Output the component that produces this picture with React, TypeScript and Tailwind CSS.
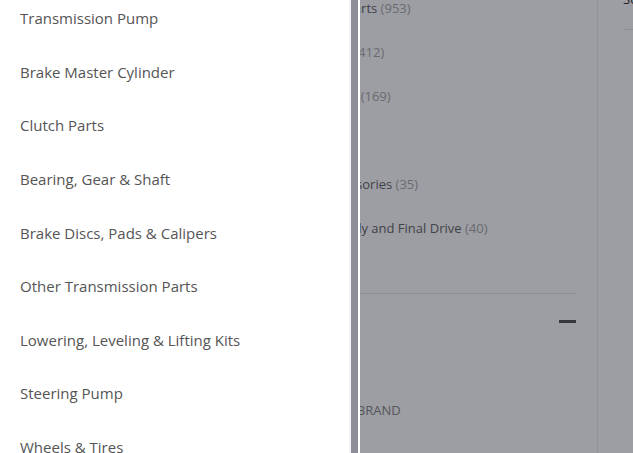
const drawerItems = [
  'Transmission Pump',
  'Brake Master Cylinder',
  'Clutch Parts',
  'Bearing, Gear & Shaft',
  'Brake Discs, Pads & Calipers',
  'Other Transmission Parts',
  'Lowering, Leveling & Lifting Kits',
  'Steering Pump',
  'Wheels & Tires',
  'Engine Mounts',
]

const categories = [
  { name: 'Transmission Parts', count: 953 },
  { name: 'Steering Gears', count: 412 },
  { name: 'Suspension Kits', count: 169 },
  { name: 'Lighting', count: 72 },
  { name: 'Universal Accessories', count: 35 },
  { name: 'Spindle Assembly and Final Drive', count: 40 },
]

const App = () => {
  return (
    <div className="relative h-[453px] w-[633px] overflow-hidden bg-white font-['Open_Sans',sans-serif]">
      {/* Page behind the drawer */}
      <div className="flex h-full">
        <div className="w-[598px] shrink-0 border-r border-[#ebebeb] pl-[262px]">
          {/* Category filter */}
          <div className="-mt-[14px] w-[315px] border-b border-[#e5e5e5] pb-[43px]">
            {categories.map((c) => (
              <div key={c.name} className="h-[44px] whitespace-nowrap text-[13px] leading-[44px] text-[#666]">
                {c.name} <span className="text-[#aaa]">({c.count})</span>
              </div>
            ))}
          </div>

          {/* Brand filter */}
          <div className="w-[315px]">
            <div className="flex items-center justify-between pt-[14px] text-[14px] leading-[24px] text-[#333]">
              <span>BRAND</span>
              <span className="mr-[1px] mt-[2px] h-[3px] w-[17px] bg-[#555]" />
            </div>
            <div className="mt-[18px] text-[13px] leading-[24px] text-[#555]">Search brand:</div>
            <div className="mt-[23px] whitespace-nowrap text-[13px] leading-[26px] text-[#888]">PLEASE SELECT BRAND</div>
          </div>
        </div>

        {/* Right column */}
        <div className="flex-1 pl-[25px]">
          <div className="-mt-[14px] h-[44px] border-b border-[#e5e5e5] text-[13px] leading-[26px] text-[#333]">
            Sort
          </div>
        </div>
      </div>

      {/* Backdrop */}
      <div className="absolute inset-0 bg-[rgba(10,12,25,0.4)]" />

      {/* Drawer */}
      <div className="absolute inset-y-0 left-0 flex w-[360px] bg-white">
        <div className="w-[349px] overflow-hidden">
          <ul className="-mt-[8px]">
            {drawerItems.map((item) => (
              <li key={item} className="py-4 pl-5 text-[15px] leading-[21.625px] text-[#555]">
                {item}
              </li>
            ))}
          </ul>
        </div>
        <div className="flex w-[11px] bg-white">
          <div className="w-[2px] bg-[#f3f3f3]" />
          <div className="w-[7px] bg-[#8d8e99]" />
        </div>
      </div>
    </div>
  )
}

export default App
